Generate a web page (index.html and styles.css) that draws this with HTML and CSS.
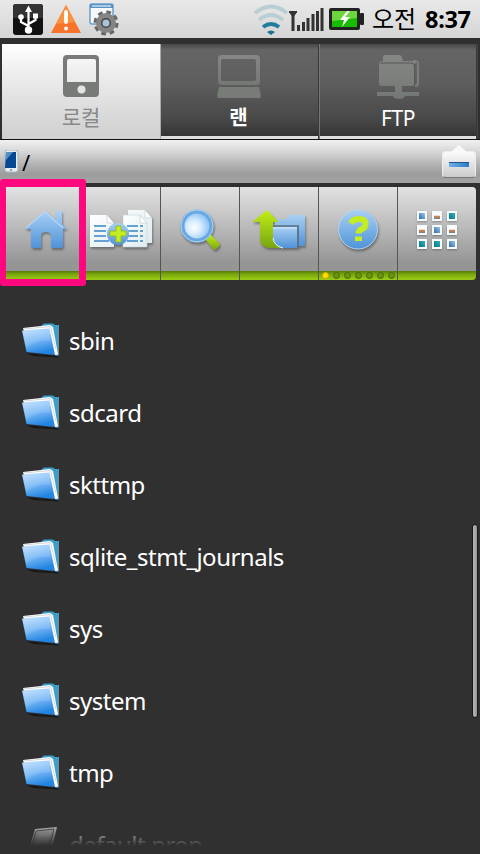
FILE: index.html
```html
<!DOCTYPE html>
<html lang="ko">
<head>
  <meta charset="UTF-8">
  <meta name="viewport" content="width=device-width, initial-scale=1.0">
  <title>File Manager</title>
  <link rel="stylesheet" href="styles.css">
</head>
<body>
  <svg class="defs" width="0" height="0">
    <defs>
      <linearGradient id="blue" x1="0" y1="0" x2="0" y2="1"><stop offset="0" stop-color="#a9d0f4"/><stop offset="1" stop-color="#4f93d8"/></linearGradient>
      <linearGradient id="green" x1="0" y1="0" x2="0" y2="1"><stop offset="0" stop-color="#c2ef16"/><stop offset="1" stop-color="#78a512"/></linearGradient>
      <linearGradient id="paper" x1="0" y1="0" x2="1" y2="1"><stop offset="0" stop-color="#fff"/><stop offset="1" stop-color="#dcebf0"/></linearGradient>
      <linearGradient id="front" x1="0" y1="0" x2=".3" y2="1"><stop offset="0" stop-color="#c4e2ff"/><stop offset=".5" stop-color="#7dbbf7"/><stop offset="1" stop-color="#2385e2"/></linearGradient>
      <linearGradient id="grey" x1="0" y1="0" x2="0" y2="1"><stop offset="0" stop-color="#858785"/><stop offset="1" stop-color="#747874"/></linearGradient>
      <linearGradient id="metal" x1="0" y1="0" x2="0" y2="1"><stop offset="0" stop-color="#c5c5c5"/><stop offset="1" stop-color="#666"/></linearGradient>
      <radialGradient id="lens" cx=".4" cy=".55" r=".6"><stop offset="0" stop-color="#fff"/><stop offset=".4" stop-color="#d7ecff"/><stop offset="1" stop-color="#7ab8f3"/></radialGradient>
    </defs>
    <symbol id="folder" viewBox="0 0 40 36">
      <path d="M5 31 36 34 38 35.500 12 34z" fill="#191919"/>
      <path d="M20 4 23 1.500h9l2 1.500h4v30l-2 1L20 10z" fill="#3d9fc9"/>
      <path d="M37.500 4v29" stroke="#708e9a"/>
      <path d="M2 6 29 3l3 2 5 27-2 1.500L3 9z" fill="#fff"/>
      <path d="M3 7 29.500 4.500 35 27" fill="none" stroke="#c7cbd0" stroke-width=".8"/>
      <path d="M1 8.500 28.500 6.500 34 33 5.500 30z" fill="url(#front)"/>
      <path d="M2 9.500 28 7.500 30 19C20 17 12 20 5 26z" fill="#fff" opacity=".12"/>
    </symbol>
  </svg>

  <header class="status">
    <div class="notices">
      <svg width="30" height="31" viewBox="0 0 30 31">
        <rect width="30" height="31" rx="3" fill="#111"/><path d="M0 3q0-3 3-3h24q3 0 3 3v11H0z" fill="#333"/>
        <path d="M15.500 5v20M15.500 22 8 18v-4M15.500 20l7-4v-4" fill="none" stroke="#fff" stroke-width="2.200"/>
        <path d="M12 8 15.500 1.500 19 8z" fill="#fff"/><circle cx="15.500" cy="26" r="3.700" fill="#fff"/><circle cx="8" cy="13" r="2.800" fill="#fff"/><path d="M20 9.500h5v5h-5z" fill="#fff"/>
      </svg>
      <svg width="30" height="28" viewBox="0 0 30 28">
        <path d="M15 0 30 28H0z" fill="#f7742a"/><path d="M15 0 24 17 5 19z" fill="#fb903f"/>
        <path d="M15 7v10" stroke="#fff" stroke-width="3.800" stroke-linecap="round"/><circle cx="15" cy="23.500" r="2" fill="#fff"/>
      </svg>
      <svg width="30" height="33" viewBox="0 0 30 33">
        <rect x="1" y="1" width="23" height="20" rx="2" fill="#f5f8fa" stroke="#6d9dc5" stroke-width="1.500"/><path d="M1 1h23v4H1z" fill="#5b91c2"/><path d="M3 2h19v2H3z" fill="#a9cbe8"/>
        <circle cx="17" cy="20" r="10.500" fill="none" stroke="#666" stroke-width="4" stroke-dasharray="4.500 3.750"/>
        <circle cx="17" cy="20" r="7" fill="#cfdbe3" stroke="#858585" stroke-width="6"/><circle cx="17" cy="20" r="4.300" fill="#a9c4d9" stroke="#454545" stroke-width="1.500"/>
      </svg>
    </div>
    <div class="signals">
      <svg width="36" height="32" viewBox="0 0 36 32" fill="none" stroke-width="3.800">
        <path d="M2 10Q18-3 34 10M6 17Q18 7 30 17" stroke="#b8ced2"/>
        <path d="M10 24q8-6 16 0" stroke="#237e9e"/><path d="M14 29q4-3 8 0l-4 3z" fill="#1b718e"/>
      </svg>
      <svg width="36" height="26" viewBox="0 0 36 26" fill="none" stroke="#333" stroke-width="3">
        <path d="M1 6h8M2 6l3 4 3-4" stroke-width="2"/><path d="M5 7v18M10.500 19v6M15.500 16v9M20 12v13M25 8v17M29.500 5v20M34 2v23"/>
      </svg>
      <svg width="35" height="22" viewBox="0 0 35 22">
        <rect width="31" height="22" rx="2" fill="#222"/><rect x="31" y="5" width="4" height="12" rx="1" fill="#222"/>
        <path d="M3 3h25v16H3z" fill="#16bc00"/><path d="M3 3h25v7L3 13z" fill="#6ed63d"/><path d="m18 3-7 9h4l-2 7 8-10h-5l5-6z" fill="#fff"/>
      </svg>
    </div>
    <span class="ampm">오전</span>
    <span class="clock">8:37</span>
  </header>

  <nav class="tabs">
    <a class="tab active">
      <svg width="36" height="43" viewBox="0 0 36 43">
        <path fill-rule="evenodd" d="M4 0h28q4 0 4 4v34q0 4-4 4H4q-4 0-4-4V4q0-4 4-4zM6 4q-2 0-2 2v21h29V6q0-2-2-2z" fill="#777a76"/><circle cx="18.500" cy="34.500" r="4" fill="#e4e4e4"/>
      </svg>
      <span>로컬</span>
    </a>
    <a class="tab">
      <svg width="44" height="43" viewBox="0 0 44 43">
        <path fill-rule="evenodd" d="M4 0h35q4 0 4 4v22q0 4-4 4H5q-4 0-4-4V4q0-4 3-4zM6 4q-2 0-2 2v18q0 2 2 2h31q2 0 2-2V6q0-2-2-2z" fill="url(#grey)"/><path d="M2 32h40l2 9q0 2-2 2H2q-2 0-2-2z" fill="#787c77"/>
      </svg>
      <span class="bold">랜</span>
    </a>
    <a class="tab">
      <svg width="43" height="44" viewBox="0 0 43 44">
        <path d="M36 6h2q3 0 3 3v19q0 3-3 3" fill="none" stroke="#7b7e7b" stroke-width="2.200"/>
        <path d="M6 6V2q0-2 2-2h14q2 0 3 2l1 4h10q3 0 3 2l-2 1v20q0 2-3 2H25v6h17v4H28q-1 3-6 3t-6-3H0v-4h18v-6H5q-3 0-3-3V9q0-3 4-3z" fill="url(#grey)"/><path d="M3 8h31q3.500 0 3.500 3v18" fill="none" stroke="#565856"/>
      </svg>
      <span class="latin">FTP</span>
    </a>
  </nav>

  <div class="pathbar">
    <svg width="15" height="23" viewBox="0 0 15 23">
      <rect x="1" y="0" width="13" height="22" rx="2.500" fill="#e6edf2" stroke="#a3b4c0"/><path d="M2 2h10v16H1z" fill="#064794"/><path d="M2 2h7L2 10z" fill="#548fc2"/><circle cx="7" cy="20" r="1" fill="#789"/>
    </svg>
    <span class="path">/</span>
    <button class="collapse"><i></i></button>
  </div>

  <div class="toolbar">
    <div class="tools">
      <div class="tool">
        <svg width="42" height="38" viewBox="0 0 42 38"><path d="M20 0 31 9V0h6v13l5 5h-4v17q0 2-3 2h-9V25q0-4-5-4t-5 4v12H9q-3 0-3-3V18H0z" fill="url(#blue)"/><path d="M1 17 20 1l18 16" fill="none" stroke="#b3d8f7" stroke-width="1.200"/></svg>
      </div>
      <div class="tool">
        <svg width="64" height="40" viewBox="0 0 64 40">
          <g fill="url(#paper)"><path d="M39 0h17l7 8v25H39zM1 5h17l7 8v24H1z"/><path d="M34 5h17l7 8v24H34z" stroke="#c7d3d8" stroke-width=".6"/></g>
          <path d="M18 5v8h7zM51 5v8h7zM56 0v8h7z" fill="#fff" stroke="#c7d3d8" stroke-width=".8"/>
          <path d="M5 16h12M5 21h12M5 26h12M5 31h15M38 16h11M38 21h11M38 26h11M38 31h11M51 16h3M51 21h3M51 26h3M51 31h3" stroke="#3985c3" stroke-width="1.600"/>
          <circle cx="29" cy="24" r="11" fill="url(#blue)"/><path d="M27 16h5v5h5v5h-5v6h-5v-6h-6v-5h6z" fill="#c5ed20" stroke="#94bd25"/>
        </svg>
      </div>
      <div class="tool">
        <svg width="40" height="42" viewBox="0 0 40 42"><path d="m30 25 10 10q-1 4-6 6l-9-11z" fill="url(#green)"/><circle cx="17" cy="17" r="14.500" fill="url(#lens)" stroke="#69a7e2" stroke-width="4"/><circle cx="17" cy="17" r="16" fill="none" stroke="#b2d4f2"/></svg>
      </div>
      <div class="tool">
        <svg width="54" height="40" viewBox="0 0 54 40">
          <path d="M23 9h13V5h17v31H23z" fill="url(#blue)"/><path d="M20 16h26v22" fill="none" stroke="#5d6d7c" stroke-width="1.700"/><path d="M20 17h25v21H27q-7-2-7-8z" fill="url(#blue)"/><path d="M21 18h24" stroke="#d5eafc"/>
          <path d="M15 0 27 12h-6v14q0 9 9 12H19q-11 0-11-10V12H0z" fill="url(#green)"/><path d="M21 28q1 8 10 10" fill="none" stroke="#e5f2fa"/>
        </svg>
      </div>
      <div class="tool">
        <svg width="42" height="42" viewBox="0 0 42 42"><circle cx="21" cy="20.500" r="19.500" fill="url(#blue)" stroke="#b5d5f0"/><path d="M14 14.500Q16 10 22 10q6.500 0 6.500 5 0 3.500-3.500 5-3.500 1.500-3.500 4.500" fill="none" stroke="#c3ed20" stroke-width="6"/><path d="M18 27.500h7V32h-7z" fill="#c3ed20"/></svg>
        <div class="dots"><i class="on"></i><i></i><i></i><i></i><i></i><i></i><i></i></div>
      </div>
      <div class="tool">
        <div class="apps"><i></i><i class="b"></i><i class="c"></i><i class="b"></i><i></i><i class="b"></i><i class="c"></i><i class="c"></i><i></i></div>
      </div>
    </div>
    <div class="highlight"></div>
  </div>

  <main class="files">
    <div class="file"><svg class="icon"><use href="#folder"/></svg><span>sbin</span></div>
    <div class="file"><svg class="icon"><use href="#folder"/></svg><span>sdcard</span></div>
    <div class="file"><svg class="icon"><use href="#folder"/></svg><span>skttmp</span></div>
    <div class="file"><svg class="icon"><use href="#folder"/></svg><span>sqlite_stmt_journals</span></div>
    <div class="file"><svg class="icon"><use href="#folder"/></svg><span>sys</span></div>
    <div class="file"><svg class="icon"><use href="#folder"/></svg><span>system</span></div>
    <div class="file"><svg class="icon"><use href="#folder"/></svg><span>tmp</span></div>
    <div class="file">
      <svg class="icon" viewBox="0 0 40 36"><path d="M14 3 36 1 29 30H6z" fill="#ccc"/><path d="M15 5 33 3 27 28H8z" fill="url(#metal)" stroke="#555"/><path d="M17 8 30 6 26 22H13z" fill="#ddd" opacity=".4"/></svg>
      <span>default.prop</span>
    </div>
    <div class="fade"></div>
    <div class="scrollbar"></div>
  </main>
</body>
</html>
```

FILE: styles.css
```css
* {
  box-sizing: border-box;
}
body {
  margin: 0;
  width: 480px;
  height: 854px;
  overflow: hidden;
  display: flex;
  flex-direction: column;
  background-color: #303030;
  font-family: "Noto Sans", "Noto Sans CJK KR", sans-serif;
}
svg {
  display: block;
  flex: none;
}
.defs {
  position: absolute;
}
.status {
  height: 38px;
  flex: none;
  display: flex;
  align-items: center;
  padding: 0 8px 0 13px;
  background: linear-gradient(#e9e9e9, #d5d5d5);
  color: #000;
}
.notices {
  display: flex;
  align-items: center;
  gap: 8px;
}
.signals {
  display: flex;
  align-items: center;
  margin-left: auto;
  margin-right: 8px;
}
.signals svg:first-child {
  margin-right: -1px;
}
.signals svg:last-child {
  margin-left: 5px;
}
.ampm {
  width: 46px;
  font-family: "Noto Sans CJK KR", sans-serif;
  font-size: 24px;
  line-height: 36px;
  white-space: nowrap;
  padding-bottom: 2px;
}
.clock {
  width: 47px;
  margin-left: 7px;
  font-size: 23.5px;
  font-weight: bold;
  line-height: 38px;
  letter-spacing: -0.3px;
}
.tabs {
  height: 102px;
  flex: none;
  display: grid;
  grid-template-columns: 159px 159px 158px;
  padding: 6px 2px 0;
  background-color: #303030;
  border-bottom: 1px solid #111;
}
.tab {
  display: flex;
  flex-direction: column;
  align-items: center;
  padding: 11px 3px 0 0;
  color: #fff;
  font-size: 21px;
  line-height: 28px;
  background: linear-gradient(#484848, #656565 6px, #5e5e5e 40%, #484848 80%, #333 92px, #ddd 92px);
  border-right: 1px solid #777;
  box-shadow: inset -1px 0 #383838;
}
.tab:last-child {
  padding-right: 1px;
  border-right-color: #444;
}
.tab.active {
  padding-right: 0;
  color: #888;
  background: linear-gradient(#fff, #eee 30%, #d5d5d5 85%, #d0d0d0);
  border-right: 1px solid #aaa;
  box-shadow: none;
}
.tab span {
  margin-top: 5px;
}
.tab .bold {
  font-weight: bold;
  font-size: 20px;
  margin-top: 6px;
}
.tab .latin {
  letter-spacing: -0.5px;
}
.pathbar {
  height: 43px;
  flex: none;
  display: flex;
  align-items: center;
  padding: 0 4px;
  background: linear-gradient(#f1f1f1, #d9d9d9 25%, #aaa 65%, #9c9c9c 80%, #a5a5a5);
}
.path {
  margin-left: 3px;
  font-size: 22px;
  line-height: 40px;
  color: #000;
}
.collapse {
  position: relative;
  width: 34px;
  height: 27px;
  margin: 5px 0 0 auto;
  padding: 0;
  display: flex;
  align-items: center;
  justify-content: center;
  border: 1px solid #ededed;
  border-bottom-color: #777;
  border-radius: 4px;
  background: linear-gradient(#fafafa, #ccc);
}
.collapse::before {
  content: "";
  position: absolute;
  top: -7px;
  left: 8px;
  border: 8px solid transparent;
  border-top: 0;
  border-bottom: 7px solid #fafafa;
}
.collapse i {
  width: 20px;
  height: 5px;
  background: linear-gradient(100deg, #70b3ed, #2979c2);
  border-top: 1px solid #24548a;
}
.toolbar {
  position: relative;
  height: 103px;
  flex: none;
  padding: 4px 4px 0 2px;
}
.tools {
  height: 93px;
  display: grid;
  grid-template-columns: 80px repeat(4, 79px) 78px;
  border-radius: 4px;
  overflow: hidden;
}
.tool {
  display: flex;
  flex-direction: column;
  align-items: center;
  justify-content: center;
  padding-bottom: 7px;
  border-right: 1px solid #555;
  background: linear-gradient(#e2e2e2, #c5c5c5 35%, #959595 90%) 0 0 / 100% 84px no-repeat, linear-gradient(#567b08 84px, #76a50c 87px, #9dcc16);
}
.tool:first-child {
  padding-left: 9px;
}
.tool:last-child {
  border: 0;
}
.tool svg {
  filter: drop-shadow(1px 2px 1px rgba(0,0,0,0.35));
}
.dots {
  position: absolute;
  top: 89px;
  left: 322px;
  display: flex;
  gap: 4px;
}
.dots i {
  width: 7px;
  height: 7px;
  border-radius: 50%;
  border: 1px solid #49690b;
  background-color: #6a940c;
}
.dots .on {
  border-color: #dca500;
  background-color: #ffe100;
}
.apps {
  display: grid;
  grid-template-columns: repeat(3, 10px);
  gap: 4px 5px;
}
.apps i {
  width: 10px;
  height: 10px;
  border: 2px solid #f4fbff;
  background: linear-gradient(45deg, #2d6cad, #a0c5df);
  box-shadow: 0 1px 2px rgba(0,0,0,0.3);
}
.apps .b {
  background: linear-gradient(#fff 35%, #d78548 55%, #6c7e8c);
}
.apps .c {
  background: linear-gradient(45deg, #087488, #33b1ba);
}
.highlight {
  position: absolute;
  top: -4px;
  left: 0;
  width: 86px;
  height: 107px;
  border: solid #ff087f;
  border-width: 8px 7px 7px 6px;
  border-radius: 3px;
}
.files {
  position: relative;
  height: 560px;
  flex: none;
  padding: 19px 0 0 21px;
  overflow: hidden;
}
.file {
  height: 72px;
  display: flex;
  align-items: center;
  gap: 8px;
  color: #fff;
  font-size: 24px;
  line-height: 34px;
  letter-spacing: -0.5px;
}
.icon {
  width: 40px;
  height: 36px;
  margin-bottom: 2px;
}
.fade {
  position: absolute;
  left: 0;
  right: 0;
  bottom: 0;
  height: 22px;
  background: linear-gradient(rgba(48,48,48,0.1), #303030);
}
.scrollbar {
  position: absolute;
  top: 238px;
  right: 2px;
  width: 6px;
  height: 194px;
  border: 1px solid #181818;
  border-radius: 3px;
  background: linear-gradient(90deg, #b5b5b5, #999);
}
```
